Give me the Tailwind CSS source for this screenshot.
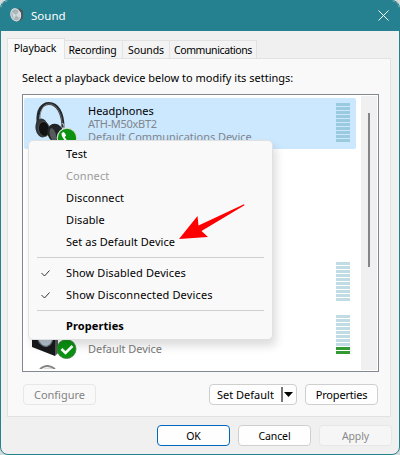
<!DOCTYPE html>
<html lang="en">
<head>
<meta charset="utf-8">
<title>Sound</title>
<script src="https://cdn.jsdelivr.net/npm/@tailwindcss/browser@4"></script>
</head>
<body class="bg-[#d5dadd] font-['Noto_Sans','Open_Sans',sans-serif] text-[11px] leading-[14px] text-black">
<main class="relative flex h-[455px] w-[400px] flex-col overflow-hidden rounded-[8px] border border-[#25808f] bg-[#f0f0f0] whitespace-nowrap">
  <header class="flex h-[30px] shrink-0 items-center bg-[#25808f] pl-[9px] pr-[10px] text-white">
    <svg class="mb-[2px]" width="14" height="16" viewBox="0 0 14 16">
      <path d="M5 2 10 1.500 13 4v7l-3 3-4 .5Z" fill="#4c5558"/>
      <ellipse cx="5.700" cy="7.800" rx="4.800" ry="6.200" transform="rotate(-16 5.700 7.800)" fill="#a9b5bb" stroke="#dbe2e4"/>
      <path d="m2 5 4 3-2 4M6 8l3-4v7Z" fill="#d3dbdf"/><path d="M10 5v5" stroke="#eef1f2"/>
    </svg>
    <h1 class="ml-[7px] text-[11.5px]">Sound</h1>
    <svg class="mb-[2px] ml-auto" width="11" height="11" viewBox="0 0 11 11"><path d="m.5.5 10 10m0-10-10 10" stroke="#fff" stroke-width="1"/></svg>
  </header>
  <nav class="z-10 flex h-[27px] shrink-0 items-end pl-[6px] text-[10.5px] tracking-[-0.25px]">
    <div class="-mb-px flex h-[21px] w-[58px] items-center justify-center border border-b-0 border-[#e2e2e2] bg-[#f9f9f9] pb-[2px] pr-[2px] tracking-[-0.1px]">Playback</div>
    <div class="flex h-[18px] w-[58px] items-center justify-center border-t border-r border-[#e2e2e2] bg-[#f3f3f3] pr-[2px]">Recording</div>
    <div class="flex h-[18px] w-[47px] items-center justify-center border-t border-r border-[#e2e2e2] bg-[#f3f3f3] tracking-[-0.1px]">Sounds</div>
    <div class="flex h-[18px] w-[87px] items-center justify-center border-t border-r border-[#e2e2e2] bg-[#f3f3f3] tracking-[-0.4px]">Communications</div>
  </nav>
  <section class="ml-[6px] flex h-[359px] w-[384px] shrink-0 flex-col border border-[#e2e2e2] bg-[#f9f9f9] pl-[14px]">
    <p class="mt-[12px] tracking-[0px]">Select a playback device below to modify its settings:</p>
    <div class="mt-[9px] flex h-[278px] w-[357px] shrink-0 overflow-hidden border border-[#828790] bg-white p-px">
      <div class="w-[332px] pt-[2px]">
        <article class="mb-[2px] flex h-[51px] rounded-[2px] bg-[#cce8ff]">
          <svg class="ml-[11px] mt-[3px] shrink-0" width="44" height="48" viewBox="0 0 44 48">
            <path d="M3 22C2 9 7 2.500 14 2.500c8 0 14 9 14 24" fill="none" stroke="#24282b" stroke-width="3"/>
            <path d="M5 18C5 8 9 3 14 3c7 0 12 8 13 18" fill="none" stroke="#777" stroke-width=".8"/>
            <ellipse cx="7" cy="27" rx="6.500" ry="9.500" transform="rotate(-10 7 27)" fill="#333638"/>
            <ellipse cx="9" cy="28" rx="5.500" ry="7.500" transform="rotate(-10 9 28)" fill="#101112" stroke="#555" stroke-width=".8"/>
            <ellipse cx="20.500" cy="32" rx="8" ry="9.500" transform="rotate(-20 20.500 32)" fill="#222527"/>
            <ellipse cx="18" cy="34" rx="3" ry="7" transform="rotate(-15 18 34)" fill="#555a5d"/>
            <path d="M27 22q3 2 2 7" fill="none" stroke="#aaa" stroke-width="1.400"/>
            <circle cx="32" cy="37" r="9.800" fill="#0c9211" stroke="#d4dfd2" stroke-width="1.200"/>
            <path d="M26.500 32.500q2-3 3.600 0l1 2-1.400 1.700q1.500 3 4.500 4.200l1.700-1.300 2.300 1.200q2 1.500-.8 3.200-3 1-7-3.300-4-4.500-3.900-7.700" fill="#fff"/>
          </svg>
          <div class="ml-[9px] flex flex-col pt-[6px] leading-[13px] text-[#7f858b]">
            <h2 class="text-black">Headphones</h2><span class="tracking-[-0.3px]">ATH-M50xBT2</span><span class="tracking-[-0.05px]">Default Communications Device</span>
          </div>
          <div class="ml-auto mr-[6px] mt-[5px] h-[39px] w-[14px] bg-[repeating-linear-gradient(#99cade_0_3px,transparent_3px_4px)]"></div>
        </article>
        <div class="mb-[2px] h-[51px]"></div>
        <div class="mb-[2px] h-[51px]"></div>
        <div class="mb-[2px] flex h-[51px] justify-end pr-[6px] pt-[5px]"><div class="h-[39px] w-[14px] bg-[repeating-linear-gradient(#c1dce4_0_3px,transparent_3px_4px)]"></div></div>
        <article class="mb-[2px] flex h-[51px]">
          <svg class="ml-[8px] shrink-0" width="46" height="51" viewBox="0 0 46 51">
            <path d="M0 5 23 9v37L0 37Z" fill="#17191b"/><path d="m23 9 3 4v30l-3 3Z" fill="#51575a"/>
            <ellipse cx="13" cy="27" rx="7.500" ry="9.500" transform="rotate(-15 13 27)" fill="#b9c8d2" stroke="#687680" stroke-width="1.200"/>
            <circle cx="34.500" cy="39" r="9.500" fill="#0c9211" stroke="#467849" stroke-width=".8"/><path d="m29.500 39 4 4 7-7" fill="none" stroke="#fff" stroke-width="2.600"/>
          </svg>
          <div class="ml-[10px] pt-[32px] leading-[13px] tracking-[-0.05px] text-[#7b7b7b]">Default Device</div>
          <div class="ml-auto mr-[6px] mt-[5px] h-[39px] w-[14px]">
            <div class="h-[32px] bg-[repeating-linear-gradient(#c1dce4_0_3px,transparent_3px_4px)]"></div>
            <div class="h-[7px] bg-[repeating-linear-gradient(#339933_0_3px,transparent_3px_4px)]"></div>
          </div>
        </article>
        <svg class="ml-[15px] mt-[4px]" width="20" height="4" viewBox="0 0 20 4"><path d="M1 4Q8-2 16 4" fill="none" stroke="#858585" stroke-width="2"/><path d="M5 4h8" stroke="#bbb"/></svg>
      </div>
      <div class="ml-auto h-[274px] w-[16px] bg-[#f0f0f0] pl-[7px] pt-[17px]"><div class="h-[154px] w-[2px] bg-[#858585]"></div></div>
    </div>
    <div class="mt-[12px] flex pl-px">
      <button class="h-[21px] w-[73px] rounded-[4px] border border-[#e7e7e7] text-[#838383]">Configure</button>
      <button class="ml-[113px] flex h-[21px] w-[88px] items-center rounded-[4px] border border-[#cfcfcf] bg-[#fefefe] pl-[7px]"><span>Set Default</span>
        <svg class="ml-auto mr-[2px]" width="13" height="15" viewBox="0 0 13 15"><path d="M1 0v15" stroke="#777" stroke-width="2"/><path d="M3 5h9l-4.500 5Z"/></svg></button>
      <button class="ml-[8px] h-[21px] w-[73px] rounded-[4px] border border-[#cfcfcf] bg-[#fefefe] tracking-[-0.2px]">Properties</button>
    </div>
  </section>
  <footer class="mt-[8px] flex gap-[8px] pl-[156px] text-[10.5px] tracking-[-0.1px]">
    <button class="h-[21px] w-[73px] rounded-[4px] border border-[#0067c0] bg-[#fefefe]">OK</button>
    <button class="h-[21px] w-[73px] rounded-[4px] border border-[#cfcfcf] bg-[#fefefe]">Cancel</button>
    <button class="h-[21px] w-[73px] rounded-[4px] border border-[#e7e7e7] bg-[#f6f6f6] text-[#8a8a8a]">Apply</button>
  </footer>

  <div role="menu" class="absolute left-[27px] top-[139px] z-20 flex h-[200px] w-[245px] flex-col rounded-[5px] border border-[#e1e1e1] bg-[#f9f9f9] pt-[2px] leading-[22px] tracking-[0.1px] shadow-[3px_6px_10px_rgba(0,0,0,0.14)]">
    <div class="pl-[37px]">Test</div>
    <div class="pl-[37px] text-[#9c9c9c]">Connect</div>
    <div class="pl-[37px]">Disconnect</div>
    <div class="pl-[37px]">Disable</div>
    <div class="pl-[37px] tracking-[0.05px]">Set as Default Device</div>
    <hr class="mx-[8px] my-[4px] border-[#d0d0d0]">
    <div class="flex items-center pl-[12px]"><svg class="mr-[16px]" width="9" height="7" viewBox="0 0 9 7"><path d="m.5 3 3 3 5-5.500" fill="none" stroke="#333"/></svg>Show Disabled Devices</div>
    <div class="flex items-center pl-[12px] tracking-[0.15px]"><svg class="mr-[16px]" width="9" height="7" viewBox="0 0 9 7"><path d="m.5 3 3 3 5-5.500" fill="none" stroke="#333"/></svg>Show Disconnected Devices</div>
    <hr class="mx-[8px] my-[4px] border-[#d0d0d0]">
    <div class="pl-[37px] font-bold">Properties</div>
    <svg class="absolute left-[150px] top-[63px]" width="66" height="37" viewBox="0 0 66 37"><path d="M65 .3 65.500 1.300 22.500 27 29 33 0 35 18.500 12 19.500 21.500Z" fill="#f00"/></svg>
  </div>
</main>
</body>
</html>
